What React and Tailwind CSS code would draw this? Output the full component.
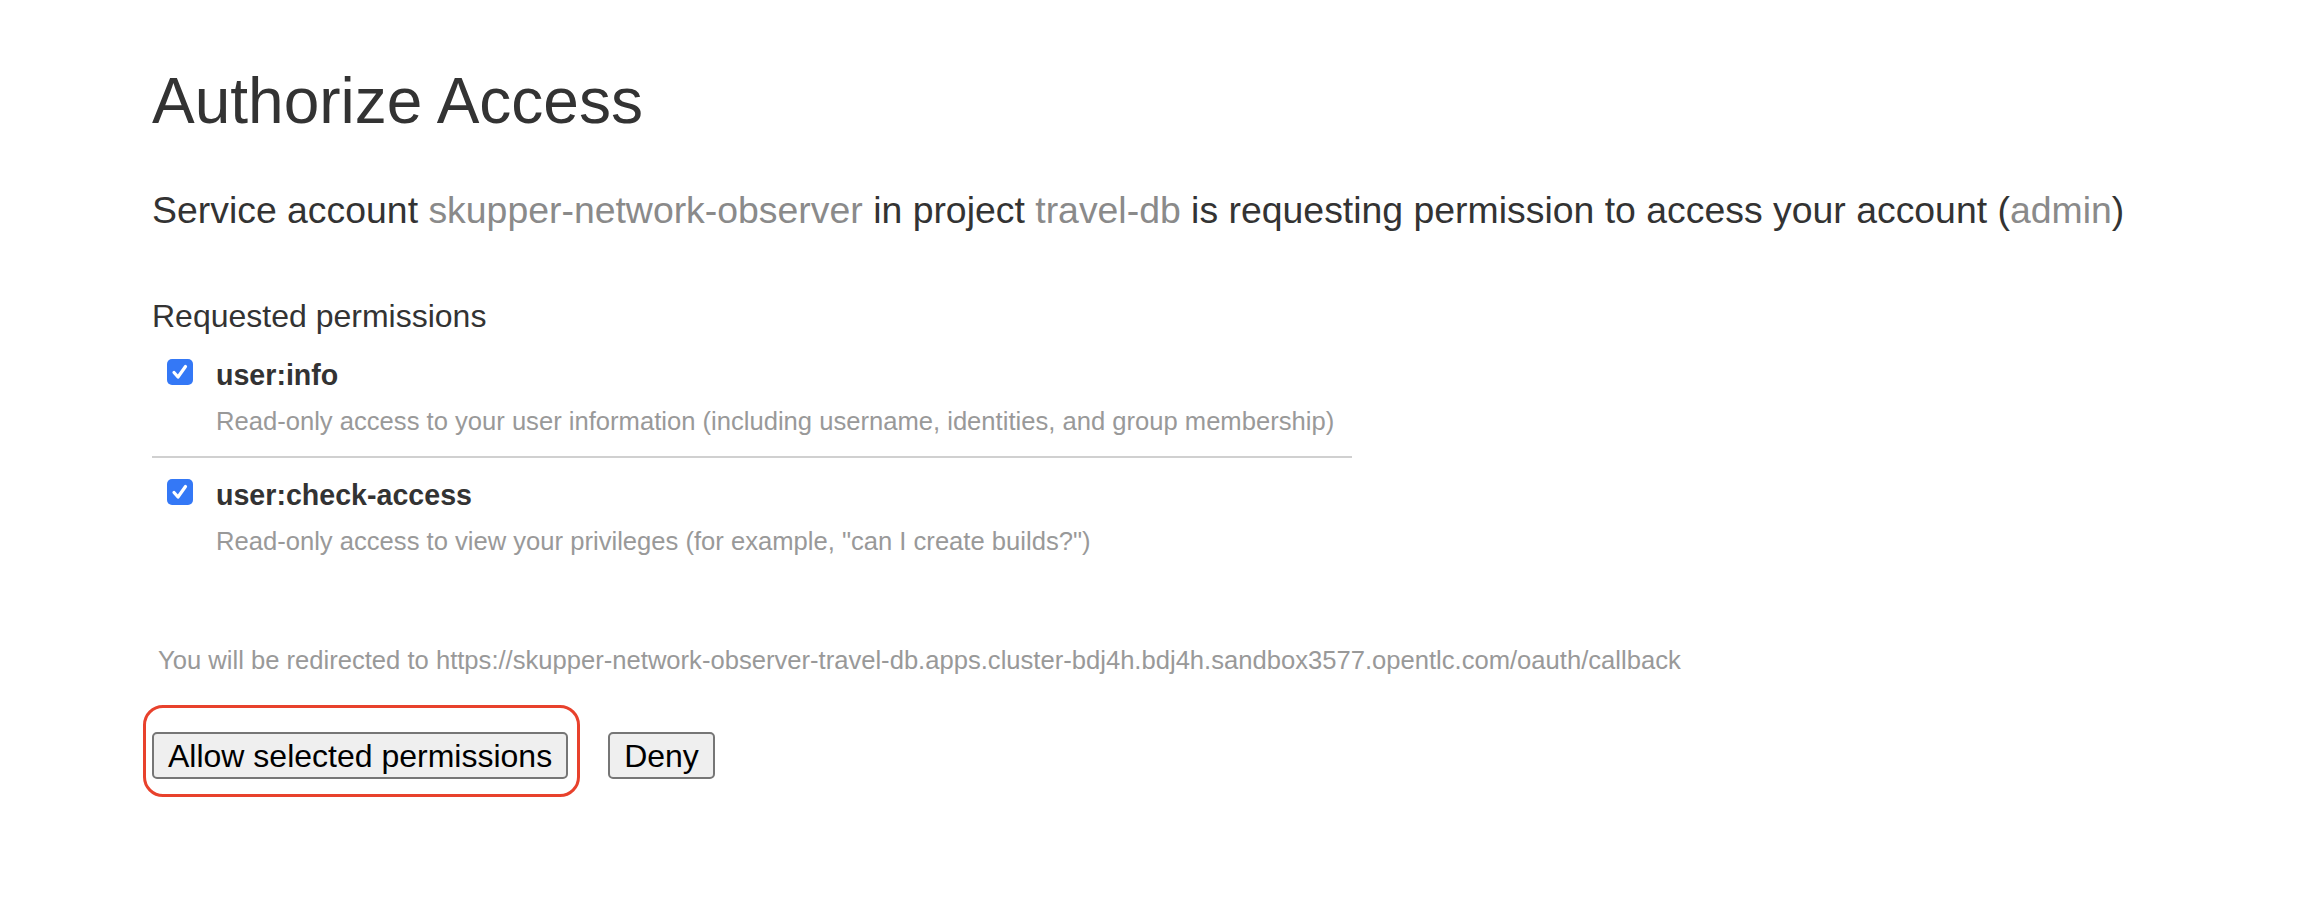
import React from "react";

const Checkbox = () => {
  return (
    <div className="w-[26px] h-[26px] shrink-0 ml-[15px] rounded-[5px] bg-[#3478f6] flex items-center justify-center">
      <svg width="20" height="20" viewBox="0 0 20 20" fill="none">
        <path d="M4 10.5 L8 15 L15.5 4.5" stroke="white" strokeWidth="3.2" strokeLinecap="round" strokeLinejoin="round" />
      </svg>
    </div>
  );
};

const Permission = ({ name, desc, last }) => {
  return (
    <div className={"w-[1200px] " + (last ? "" : "border-b-2 border-[#d0d0d0] pb-[20px]")}>
      <div className="flex items-start gap-[23px]">
        <Checkbox />
        <h3 className="text-[28.6px] leading-[32px] font-bold text-[#333]">{name}</h3>
      </div>
      <p className="mt-[16px] pl-[64px] text-[25.6px] leading-[29px] text-[#999]">{desc}</p>
    </div>
  );
};

const App = () => {
  return (
    <div className="min-h-[913px] bg-white pl-[152px] pt-[64px] font-['Liberation_Sans',Arial,sans-serif] text-[#333]">
      <h1 className="text-[64px] leading-[74px]">Authorize Access</h1>

      <p className="mt-[52px] text-[37.4px] leading-[41px]">
        Service account <span className="text-[#8a8a8a]">skupper-network-observer</span> in project{" "}
        <span className="text-[#8a8a8a]">travel-db</span> is requesting permission to access your account (
        <span className="text-[#8a8a8a]">admin</span>)
      </p>

      <h2 className="mt-[67px] text-[32px] leading-[37px]">Requested permissions</h2>

      <div className="mt-[24px]">
        <Permission
          name="user:info"
          desc="Read-only access to your user information (including username, identities, and group membership)"
        />
        <div className="mt-[21px]">
          <Permission
            name="user:check-access"
            desc={'Read-only access to view your privileges (for example, "can I create builds?")'}
            last
          />
        </div>
      </div>

      <p className="mt-[90px] pl-[6px] text-[25.6px] leading-[28px] text-[#999]">
        You will be redirected to https://skupper-network-observer-travel-db.apps.cluster-bdj4h.bdj4h.sandbox3577.opentlc.com/oauth/callback
      </p>

      {/* buttons */}
      <div className="mt-[58px] flex items-center gap-[40px]">
        <div className="relative">
          <button className="h-[47px] px-[14px] border-2 border-[#767676] rounded-[5px] bg-[#efefef] text-[32px] leading-none text-black">
            Allow selected permissions
          </button>
          <div className="absolute -left-[9px] -top-[27px] w-[437px] h-[92px] border-[3px] border-[#e8412c] rounded-[20px] pointer-events-none"></div>
        </div>
        <button className="h-[47px] px-[14px] border-2 border-[#767676] rounded-[5px] bg-[#efefef] text-[32px] leading-none text-black">
          Deny
        </button>
      </div>
    </div>
  );
};

export default App;
